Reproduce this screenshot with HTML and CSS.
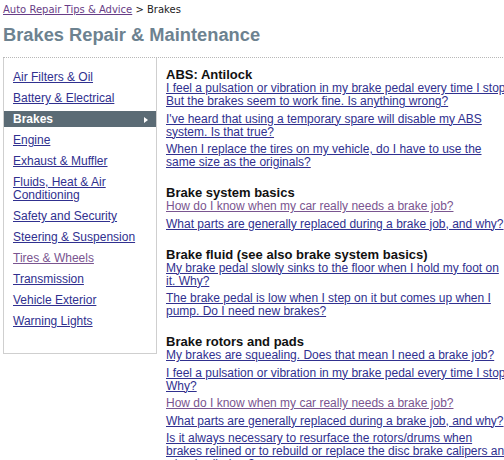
FILE: index.html
```html
<!DOCTYPE html>
<html lang="en">
<head>

	<!-- Page title -->
	<title>Brakes Repair &amp; Maintenance</title>

	<!-- Meta tags -->
	<meta charset="UTF-8">
	<meta name="viewport" content="width=device-width, initial-scale=1.0">

	<!-- Style -->
	<link rel="stylesheet" href="styles.css">

</head>
<body>

	<!-- Header -->
	<header class="header">
		<div class="crumbs">
			<a class="seen" href="#">Auto Repair Tips &amp; Advice</a> &gt; Brakes
		</div>
		<h1>Brakes Repair &amp; Maintenance</h1>
	</header>

	<div class="page">

		<!-- Categories -->
		<nav class="sidebar">
			<ul>
				<li><a href="#">Air Filters &amp; Oil</a></li>
				<li><a href="#">Battery &amp; Electrical</a></li>
				<li><a class="active" href="#">Brakes <span class="arrow"></span></a></li>
				<li><a href="#">Engine</a></li>
				<li><a href="#">Exhaust &amp; Muffler</a></li>
				<li><a href="#">Fluids, Heat &amp; Air Conditioning</a></li>
				<li><a href="#">Safety and Security</a></li>
				<li><a href="#">Steering &amp; Suspension</a></li>
				<li><a class="seen" href="#">Tires &amp; Wheels</a></li>
				<li><a href="#">Transmission</a></li>
				<li><a href="#">Vehicle Exterior</a></li>
				<li><a href="#">Warning Lights</a></li>
			</ul>
		</nav>

		<!-- Questions -->
		<main class="content">

			<section class="topic">
				<h3>ABS: Antilock</h3>
				<ul>
					<li><a href="#">I feel a pulsation or vibration in my brake pedal every time I stop. But the brakes seem to work fine. Is anything wrong?</a></li>
					<li><a href="#">I've heard that using a temporary spare will disable my ABS system. Is that true?</a></li>
					<li><a href="#">When I replace the tires on my vehicle, do I have to use the same size as the originals?</a></li>
				</ul>
			</section>

			<section class="topic">
				<h3>Brake system basics</h3>
				<ul>
					<li><a class="seen" href="#">How do I know when my car really needs a brake job?</a></li>
					<li><a href="#">What parts are generally replaced during a brake job, and why?</a></li>
				</ul>
			</section>

			<section class="topic">
				<h3>Brake fluid (see also brake system basics)</h3>
				<ul>
					<li><a href="#">My brake pedal slowly sinks to the floor when I hold my foot on it. Why?</a></li>
					<li><a href="#">The brake pedal is low when I step on it but comes up when I pump. Do I need new brakes?</a></li>
				</ul>
			</section>

			<section class="topic">
				<h3>Brake rotors and pads</h3>
				<ul>
					<li><a href="#">My brakes are squealing. Does that mean I need a brake job?</a></li>
					<li><a href="#">I feel a pulsation or vibration in my brake pedal every time I stop. Why?</a></li>
					<li><a class="seen" href="#">How do I know when my car really needs a brake job?</a></li>
					<li><a href="#">What parts are generally replaced during a brake job, and why?</a></li>
					<li><a href="#">Is it always necessary to resurface the rotors/drums when brakes relined or to rebuild or replace the disc brake calipers and wheel cylinders?</a></li>
				</ul>
			</section>

		</main>
	</div>

</body>
</html>
```

FILE: styles.css
```css
* {
	box-sizing: border-box;
}

html,
body {
	margin: 0;
	overflow: hidden;
}

body {
	background-color: #ffffff;
	font-family: 'Liberation Sans', Arial, sans-serif;
	font-size: 12px;
	color: #111111;
	padding: 0 0 0 3px;
}

a {
	color: #30308f;
}

a.seen {
	color: #7a5590;
}

ul {
	list-style: none;
	margin: 0;
	padding: 0;
}

/* Header */

.header {
	padding-top: 4px;
	border-bottom: 1px dotted #b8b8b8;
	width: 600px;
}

.crumbs {
	font-family: 'DejaVu Sans', Verdana, sans-serif;
	font-size: 10px;
	line-height: 12px;
	color: #222222;
}

.crumbs a.seen {
	color: #683d86;
}

h1 {
	margin: 8px 0 11px;
	font-size: 18.3px;
	line-height: 22px;
	color: #6d8290;
}

/* Layout */

.page {
	display: flex;
	align-items: flex-start;
}

/* Sidebar */

.sidebar {
	flex: none;
	width: 154px;
	border: 1px solid #cfcfcf;
	border-top: none;
}

.sidebar ul {
	padding: 11px 0 24px;
}

.sidebar li + li {
	margin-top: 5px;
}

.sidebar a {
	display: block;
	padding: 2px 9px 1px;
	line-height: 13px;
}

.sidebar a.active {
	display: flex;
	justify-content: space-between;
	align-items: center;
	background-color: #5b6b75;
	color: #ffffff;
	font-weight: bold;
	text-decoration: none;
}

.arrow {
	width: 0;
	height: 0;
	margin-right: -1px;
	border-top: 3px solid transparent;
	border-bottom: 3px solid transparent;
	border-left: 4px solid #ffffff;
}

/* Content */

.content {
	flex: none;
	width: 345px;
	margin-left: 9px;
	padding-top: 9px;
}

.topic {
	margin-bottom: 16px;
}

h3 {
	margin: 0;
	font-size: 13px;
	line-height: 15px;
	color: #111111;
}

.content li {
	line-height: 13px;
	margin-bottom: 4.5px;
}
```
